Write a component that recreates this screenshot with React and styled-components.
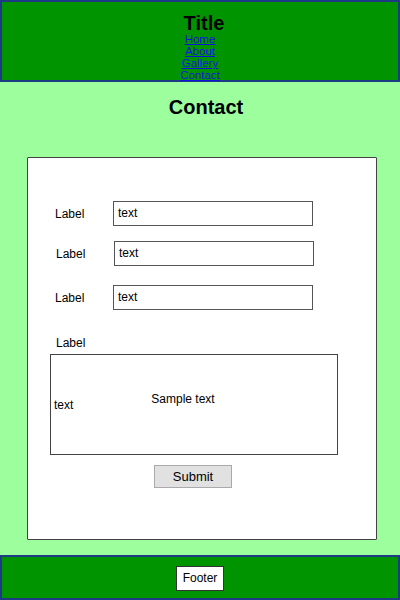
import React from 'react';
import styled, { createGlobalStyle } from 'styled-components';

const GlobalStyle = createGlobalStyle`
  html, body {
    margin: 0;
    padding: 0;
    height: 100%;
  }
  body {
    font-family: "Liberation Sans", Arial, sans-serif;
    background: #9cfe9c;
  }
  #root {
    height: 100%;
  }
`;

const fields = ['text', 'text', 'text'];

function App() {
  return (
    <>
      <GlobalStyle />
      <Page>
        <Header>
          <Title>Title</Title>
          <Nav>
            <NavLink href="#">Home</NavLink>
            <NavLink href="#">About</NavLink>
            <NavLink href="#">Gallery</NavLink>
            <NavLink href="#">Contact</NavLink>
          </Nav>
        </Header>
        <Main>
          <Heading>Contact</Heading>
          <Card>
            {fields.map((value, i) => (
              <Row key={i} $top={[43, 15, 19][i]} $shift={i === 1 ? 1 : 0}>
                <Label>Label</Label>
                <Field>{value}</Field>
              </Row>
            ))}
            <AreaLabel>Label</AreaLabel>
            <TextArea>
              <AreaText>text</AreaText>
              <AreaSample>Sample text</AreaSample>
            </TextArea>
            <Submit>Submit</Submit>
          </Card>
        </Main>
        <Footer>
          <FooterBox>Footer</FooterBox>
        </Footer>
      </Page>
    </>
  );
}

// Custom CSS
const Page = styled.div`
  display: flex;
  flex-direction: column;
  height: 600px;
`;
const Header = styled.header`
  box-sizing: border-box;
  height: 82px;
  background: #009400;
  border: 2px solid #1c3a86;
  display: flex;
  flex-direction: column;
  align-items: center;
  padding-top: 10px;
`;
const Title = styled.h1`
  margin: 0 0 0 8px;
  font-size: 20px;
  line-height: 22px;
  font-weight: bold;
  color: #000;
`;
const Nav = styled.nav`
  display: flex;
  flex-direction: column;
  align-items: center;
  margin-top: -1px;
`;
const NavLink = styled.a`
  color: #1010e0;
  font-size: 11.5px;
  line-height: 12px;
  text-decoration: underline;
`;
const Main = styled.main`
  flex: 1;
  display: flex;
  flex-direction: column;
  padding: 0 23px 15px 27px;
`;
const Heading = styled.h2`
  margin: 0;
  height: 75px;
  padding: 13px 0 0 8px;
  box-sizing: border-box;
  text-align: center;
  font-size: 20px;
  line-height: 24px;
  font-weight: bold;
  color: #000;
`;
const Card = styled.section`
  flex: 1;
  background: #fff;
  border: 1.5px solid #444;
  border-radius: 1px;
  display: flex;
  flex-direction: column;
`;
const Row = styled.div`
  display: flex;
  align-items: center;
  margin-top: ${(p) => p.$top}px;
  padding-left: ${(p) => 27 + p.$shift}px;
`;
const Label = styled.span`
  width: 58px;
  font-size: 12px;
  color: #000;
`;
const Field = styled.div`
  box-sizing: border-box;
  width: 200px;
  height: 25px;
  border: 1.5px solid #555;
  padding-left: 4px;
  font-size: 12px;
  line-height: 22px;
  color: #000;
`;
const AreaLabel = styled.span`
  margin: 26px 0 0 28px;
  font-size: 12px;
  line-height: 14px;
`;
const TextArea = styled.div`
  box-sizing: border-box;
  width: 288px;
  height: 101px;
  margin: 4px 0 0 22px;
  border: 1.5px solid #444;
  display: grid;
  align-items: center;
  font-size: 12px;
`;
const AreaText = styled.span`
  grid-area: 1 / 1;
  justify-self: start;
  padding: 1px 0 0 3px;
`;
const AreaSample = styled.span`
  grid-area: 1 / 1;
  justify-self: center;
  margin: 0 22px 12px 0;
`;
const Submit = styled.button`
  align-self: flex-start;
  margin: 10px 0 0 126px;
  width: 78px;
  height: 23px;
  background: #e1e1e1;
  border: 1px solid #aaa;
  border-radius: 0;
  font-family: "Liberation Sans", Arial, sans-serif;
  font-size: 13px;
  color: #000;
  padding: 0;
`;
const Footer = styled.footer`
  box-sizing: border-box;
  height: 45px;
  background: #009400;
  border: 2px solid #1c3a86;
  display: flex;
  justify-content: center;
  padding-top: 9px;
`;
const FooterBox = styled.div`
  box-sizing: border-box;
  width: 48px;
  height: 25px;
  background: #fff;
  border: 1px solid #333;
  font-size: 12px;
  line-height: 23px;
  text-align: center;
  color: #000;
`;

export default App;
